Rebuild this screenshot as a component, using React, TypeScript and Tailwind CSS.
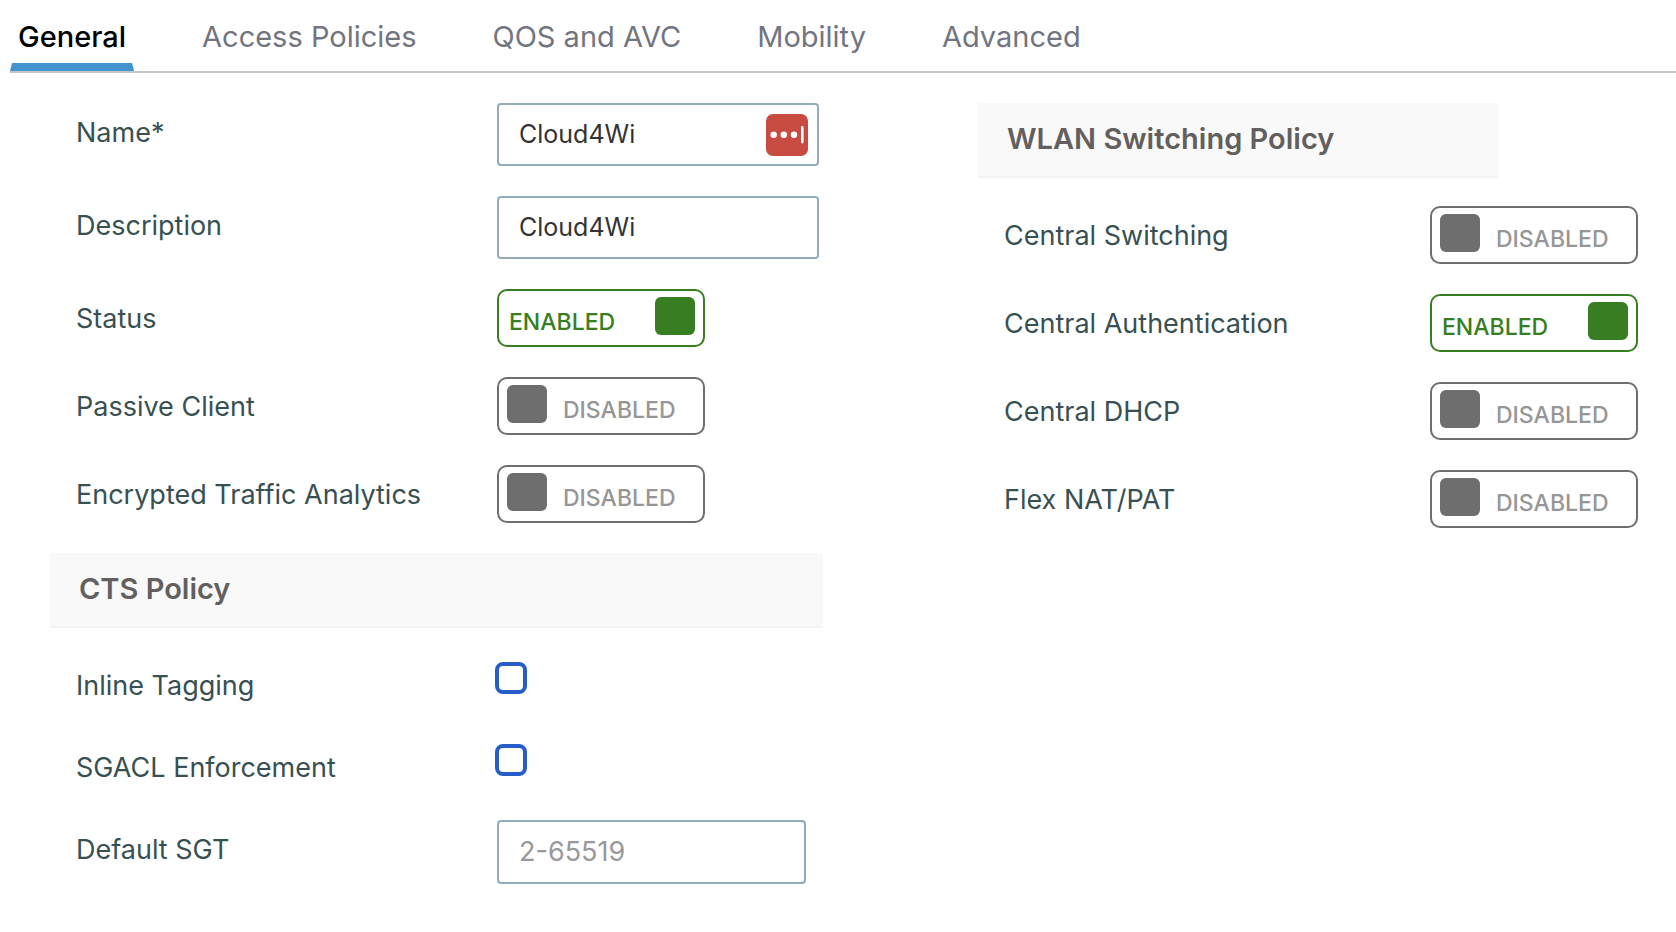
import React, { useState } from "react";
import clsx from "clsx";

const TABS = ["General", "Access Policies", "QOS and AVC", "Mobility", "Advanced"];

function SectionHeader({ title, className }: { title: string; className?: string }) {
  return (
    <h2
      className={clsx(
        "bg-[#f9f9f9] border-b-2 border-[#f4f4f4] pt-[18px] pb-[19px] pl-[29px] text-[29px] leading-9 font-semibold text-[#635f5f]",
        className
      )}
    >
      {title}
    </h2>
  );
}

function Row({ id, label, children }: { id: string; label: string; children: React.ReactNode }) {
  return (
    <div className="grid grid-cols-[421fr_326fr] items-start pl-[26px]">
      <label htmlFor={id} className="pt-3 leading-9">
        {label}
      </label>
      {children}
    </div>
  );
}

function SwitchRow({ id, label, children }: { id: string; label: string; children: React.ReactNode }) {
  return (
    <div className="flex items-start justify-between pl-[26px]">
      <label htmlFor={id} className="pt-3 leading-9">
        {label}
      </label>
      {children}
    </div>
  );
}

function Toggle({ id, initial = false }: { id: string; initial?: boolean }) {
  const [on, setOn] = useState(initial);

  return (
    <button
      id={id}
      type="button"
      role="switch"
      aria-checked={on}
      onClick={() => setOn(!on)}
      className={clsx(
        "flex h-[58px] w-[208px] items-start rounded-[10px] border-2 bg-white px-2 pt-1.5 text-[23px] leading-8 font-medium",
        on ? "justify-between border-[#377e22] text-[#377e22]" : "flex-row-reverse justify-end gap-4 border-[#6e6e6e] text-[#969696]"
      )}
    >
      <span className={clsx("pt-[9px]", on && "pl-0.5")}>{on ? "ENABLED" : "DISABLED"}</span>
      <span className={clsx("h-[38px] w-10 rounded-md", on ? "bg-[#377e22]" : "bg-[#6e6e6e]")} />
    </button>
  );
}

function TextInput({ className, ...props }: React.InputHTMLAttributes<HTMLInputElement>) {
  return (
    <input
      type="text"
      className={clsx(
        "w-full rounded border-2 border-[#91adbc] bg-white px-5 pb-0.5 text-[#333] outline-none placeholder:text-[#999]",
        className
      )}
      {...props}
    />
  );
}

function Checkbox({ id }: { id: string }) {
  return (
    <div className="h-[52px] pt-1.5">
      <input
        id={id}
        type="checkbox"
        className="-ml-0.5 block size-8 appearance-none rounded-lg border-4 border-[#255ec8] bg-white checked:bg-[#255ec8]"
      />
    </div>
  );
}

function PasswordManagerIcon() {
  return (
    <svg width="42" height="42" viewBox="0 0 42 42" aria-hidden="true">
      <rect width="42" height="42" rx="7" fill="#c74b41" />
      <circle cx="7.7" cy="20.8" r="3.2" fill="#fff" />
      <circle cx="17.8" cy="20.8" r="3.2" fill="#fff" />
      <circle cx="28" cy="20.8" r="3.2" fill="#fff" />
      <rect x="35" y="12" width="2.6" height="17.4" rx="1.3" fill="#fff" />
    </svg>
  );
}

export default function App() {
  const [tab, setTab] = useState("General");
  const [name, setName] = useState("Cloud4Wi");
  const [description, setDescription] = useState("Cloud4Wi");
  const [sgt, setSgt] = useState("");

  return (
    <div className="min-h-screen bg-white font-['Inter',sans-serif] text-[27px] text-[#385052]">
      <nav className="ml-2.5 flex gap-[60px] border-b-2 border-[#c0c6cc] pt-[19px]">
        {TABS.map((t) => (
          <button
            key={t}
            type="button"
            onClick={() => setTab(t)}
            className={clsx("text-[29px] leading-9", t === tab ? "font-medium text-black" : "text-[#727580]")}
          >
            <span className="block px-2">{t}</span>
            <span
              className={clsx(
                "mt-2 block h-2 [clip-path:polygon(2px_0,calc(100%-2px)_0,100%_100%,0_100%)]",
                t === tab && "bg-[#4393d1]"
              )}
            />
          </button>
        ))}
      </nav>

      <main className="grid grid-cols-[773fr_660fr] items-start gap-x-[155px] pt-[30px] pr-[38px] pb-12 pl-[50px]">
        <section>
          <div className="flex flex-col gap-[30px]">
            <Row id="name" label="Name*">
              <div className="relative w-full max-w-[322px]">
                <TextInput
                  id="name"
                  className="h-[63px] text-[25px]"
                  value={name}
                  onChange={(e) => setName(e.target.value)}
                />
                <span className="absolute top-[11px] right-[11px]">
                  <PasswordManagerIcon />
                </span>
              </div>
            </Row>
            <Row id="description" label="Description">
              <TextInput
                id="description"
                className="h-[63px] max-w-[322px] text-[25px]"
                value={description}
                onChange={(e) => setDescription(e.target.value)}
              />
            </Row>
            <Row id="status" label="Status">
              <Toggle id="status" initial />
            </Row>
            <Row id="passive-client" label="Passive Client">
              <Toggle id="passive-client" />
            </Row>
            <Row id="eta" label="Encrypted Traffic Analytics">
              <Toggle id="eta" />
            </Row>
          </div>

          <SectionHeader title="CTS Policy" className="mt-[30px] mb-7" />

          <div className="flex flex-col gap-[30px]">
            <Row id="inline-tagging" label="Inline Tagging">
              <Checkbox id="inline-tagging" />
            </Row>
            <Row id="sgacl" label="SGACL Enforcement">
              <Checkbox id="sgacl" />
            </Row>
            <Row id="sgt" label="Default SGT">
              <TextInput
                id="sgt"
                className="h-16 max-w-[309px] text-[27px]"
                placeholder="2-65519"
                value={sgt}
                onChange={(e) => setSgt(e.target.value)}
              />
            </Row>
          </div>
        </section>

        <section>
          <SectionHeader title="WLAN Switching Policy" className="mb-7 w-[79%]" />
          <div className="flex flex-col gap-[30px]">
            <SwitchRow id="central-switching" label="Central Switching">
              <Toggle id="central-switching" />
            </SwitchRow>
            <SwitchRow id="central-auth" label="Central Authentication">
              <Toggle id="central-auth" initial />
            </SwitchRow>
            <SwitchRow id="central-dhcp" label="Central DHCP">
              <Toggle id="central-dhcp" />
            </SwitchRow>
            <SwitchRow id="flex-nat" label="Flex NAT/PAT">
              <Toggle id="flex-nat" />
            </SwitchRow>
          </div>
        </section>
      </main>
    </div>
  );
}
